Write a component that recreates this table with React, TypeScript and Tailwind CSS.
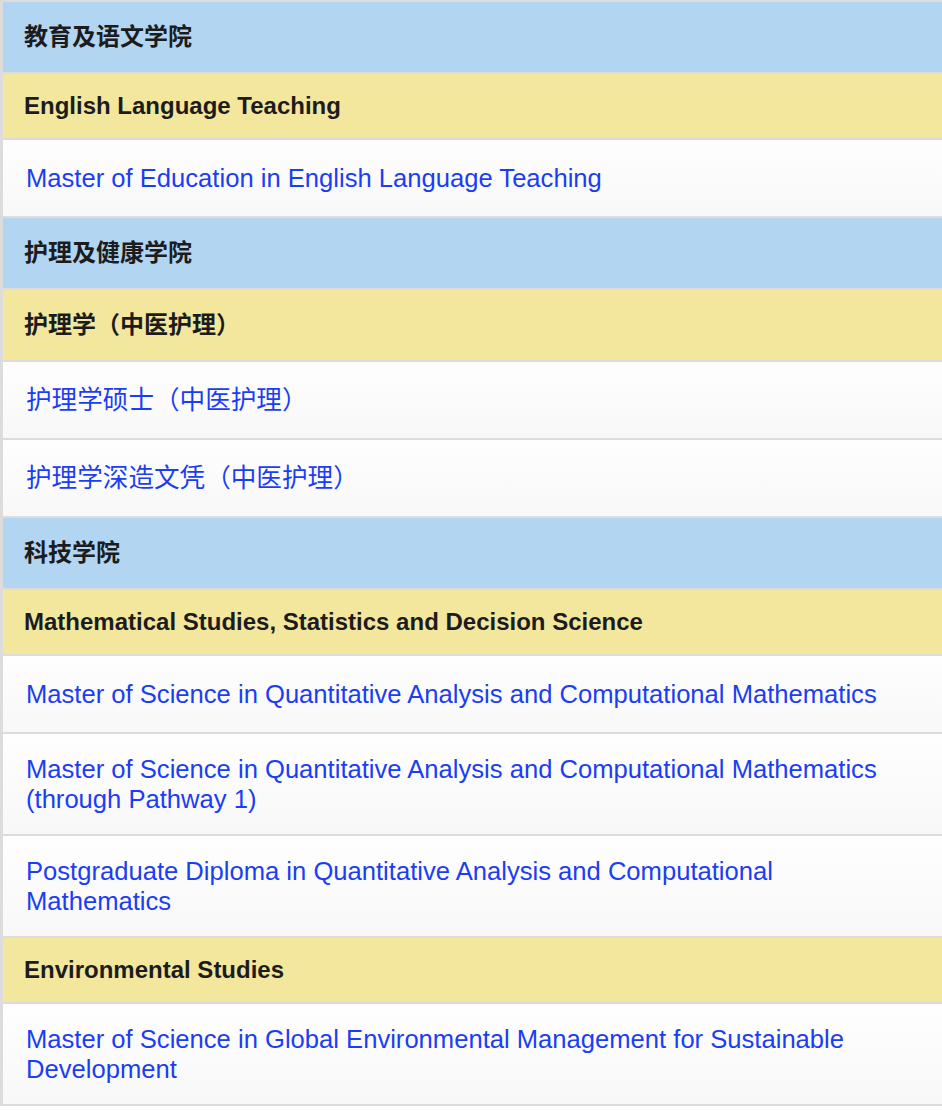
type Row =
  | { kind: "faculty"; label: string }
  | { kind: "dept"; label: string; cjk?: boolean }
  | { kind: "link"; label: string }

const rows: Row[] = [
  { kind: "faculty", label: "教育及语文学院" },
  { kind: "dept", label: "English Language Teaching" },
  { kind: "link", label: "Master of Education in English Language Teaching" },
  { kind: "faculty", label: "护理及健康学院" },
  { kind: "dept", label: "护理学（中医护理）", cjk: true },
  { kind: "link", label: "护理学硕士（中医护理）" },
  { kind: "link", label: "护理学深造文凭（中医护理）" },
  { kind: "faculty", label: "科技学院" },
  { kind: "dept", label: "Mathematical Studies, Statistics and Decision Science" },
  { kind: "link", label: "Master of Science in Quantitative Analysis and Computational Mathematics" },
  {
    kind: "link",
    label: "Master of Science in Quantitative Analysis and Computational Mathematics (through Pathway 1)",
  },
  { kind: "link", label: "Postgraduate Diploma in Quantitative Analysis and Computational Mathematics" },
  { kind: "dept", label: "Environmental Studies" },
  {
    kind: "link",
    label: "Master of Science in Global Environmental Management for Sustainable Development",
  },
]

const font = { fontFamily: '"Liberation Sans", Arial, "Noto Sans CJK SC", sans-serif' }

function TableRow({ row }: { row: Row }) {
  if (row.kind === "faculty") {
    return (
      <div className="border-b-2 border-[#dcdcdc] bg-[#b2d5f2] py-[18px] pl-[21px] pr-[30px] text-[24px] font-bold leading-[34px] text-[#1c1c1c]">
        {row.label}
      </div>
    )
  }
  if (row.kind === "dept") {
    return (
      <div
        className={`border-b-2 border-[#dcdcdc] bg-[#f3e79e] py-[18px] pl-[21px] pr-[30px] text-[24px] font-bold text-[#1c1c1c] ${
          row.cjk ? "leading-[34px]" : "leading-[28px]"
        }`}
      >
        {row.label}
      </div>
    )
  }
  return (
    <div className="flex min-h-[78px] items-center border-b-2 border-[#dcdcdc] bg-linear-to-b from-[#fefefe] to-[#f8f8f8] py-[20px] pl-[23px] pr-[30px]">
      <a href="#" className="text-[25.6px] leading-[30px] text-[#1b3ef2]">
        {row.label}
      </a>
    </div>
  )
}

export default function App() {
  return (
    <div className="min-h-[1110px] w-[942px] bg-white" style={font}>
      <div className="border-l-[3px] border-t-2 border-[#dcdcdc]">
        {rows.map((row, i) => (
          <TableRow key={i} row={row} />
        ))}
      </div>
    </div>
  )
}
